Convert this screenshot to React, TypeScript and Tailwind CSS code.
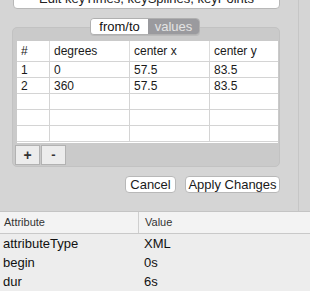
import React from "react";

const font = { fontFamily: '"Liberation Sans", Arial, sans-serif' };

const rows = [
  ["1", "0", "57.5", "83.5"],
  ["2", "360", "57.5", "83.5"],
  ["", "", "", ""],
  ["", "", "", ""],
  ["", "", "", ""],
];

const cols = ["w-[32px]", "w-[80px]", "w-[80px]", "flex-1"];

const KeyTable: React.FC = () => {
  return (
    <div className="ml-[4px] mt-[13px] w-[261px] h-[102px] bg-white overflow-hidden text-[12px] text-[#1a1a1a]">
      {/* header */}
      <div className="flex h-[21px] border-b border-[#d4d4d4]">
        {["#", "degrees", "center x", "center y"].map((h, i) => (
          <div
            key={h}
            className={`${cols[i]} flex items-center pl-[4px] ${i > 0 ? "border-l border-[#dcdcdc]" : ""}`}
          >
            {h}
          </div>
        ))}
      </div>
      {rows.map((r, ri) => (
        <div key={ri} className="flex h-[16px] border-b border-[#d4d4d4]">
          {r.map((c, i) => (
            <div
              key={i}
              className={`${cols[i]} flex items-center pl-[4px] ${i > 0 ? "border-l border-[#d4d4d4]" : ""}`}
            >
              {c}
            </div>
          ))}
        </div>
      ))}
    </div>
  );
};

const App: React.FC = () => {
  return (
    <div className="w-[310px] h-[291px] bg-[#d5d5d5] overflow-hidden flex flex-col" style={font}>
      <div className="flex h-[214px]">
        <div className="w-[298px] flex flex-col">
          {/* cut-off top button */}
          <div className="ml-[13px] -mt-[12px] w-[267px] h-[21px] bg-white rounded-[4px] border border-[#b8b8b8] flex items-center justify-center text-[13px] text-[#222]">
            Edit keyTimes, keySplines, keyPoints
          </div>

          {/* group box */}
          <div className="relative ml-[12px] mt-[18px] w-[268px] h-[140px] bg-[#cacaca] rounded-[5px] border border-[#c2c2c2]">
            <div className="absolute -top-[10px] left-[77px] flex h-[17px] rounded-[4px] border border-[#b0b0b0] overflow-hidden text-[13px] shadow-[0_1px_0_rgba(0,0,0,0.08)]">
              <div className="w-[57px] bg-white text-[#111] flex items-center justify-center">from/to</div>
              <div className="w-[51px] bg-[#9a9a9e] text-[#e4e4e4] flex items-center justify-center">values</div>
            </div>
            <KeyTable />
            <div className="flex ml-[2px] mt-[2px] gap-[1px]">
              <div className="w-[25px] h-[20px] bg-[#ececec] border border-[#b2b2b2] flex items-center justify-center text-[14px] font-bold text-[#333]">
                +
              </div>
              <div className="w-[25px] h-[20px] bg-[#ececec] border border-[#b2b2b2] flex items-center justify-center text-[13px] font-bold text-[#333]">
                -
              </div>
            </div>
          </div>

          {/* action buttons */}
          <div className="flex justify-end gap-[9px] mt-[9px] w-[280px]">
            <div className="w-[51px] h-[17px] bg-white rounded-[4px] border border-[#b8b8b8] flex items-center justify-center text-[13px] text-[#1a1a1a]">
              Cancel
            </div>
            <div className="w-[95px] h-[17px] bg-white rounded-[4px] border border-[#b8b8b8] flex items-center justify-center text-[13px] text-[#1a1a1a]">
              Apply Changes
            </div>
          </div>
        </div>
        <div className="flex-1 border-l border-[#c6c6c6]" />
      </div>

      {/* attribute panel */}
      <div className="flex-1 bg-[#ededed] border-t border-[#c4c4c4]">
        <div className="flex h-[22px] bg-[#f3f3f3] border-b border-[#c9c9c9] text-[11px] text-[#333]">
          <div className="w-[138px] flex items-center pl-[4px]">Attribute</div>
          <div className="flex-1 flex items-center pl-[6px] border-l border-[#cfcfcf]">Value</div>
        </div>
        {[
          ["attributeType", "XML"],
          ["begin", "0s"],
          ["dur", "6s"],
        ].map(([a, v]) => (
          <div key={a} className="flex h-[19px] text-[13px] text-[#111]">
            <div className="w-[138px] flex items-center pl-[3px]">{a}</div>
            <div className="flex-1 flex items-center pl-[6px]">{v}</div>
          </div>
        ))}
      </div>
    </div>
  );
};

export default App;
